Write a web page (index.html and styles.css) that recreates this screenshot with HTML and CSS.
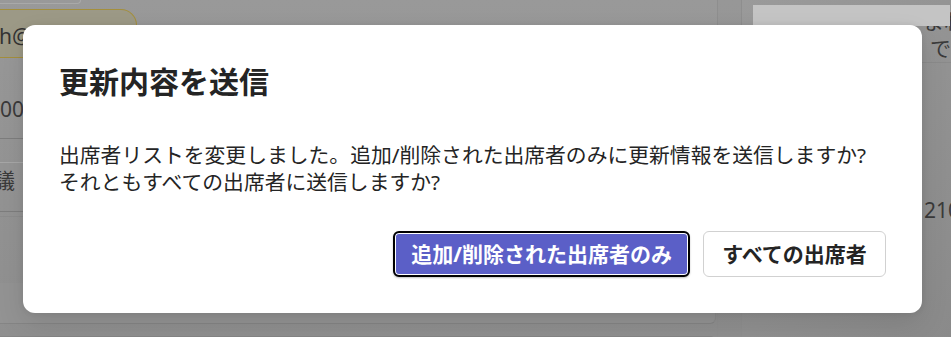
FILE: index.html
```html
<!DOCTYPE html>
<html lang="ja">
<head>
<meta charset="utf-8">
<title>更新内容を送信</title>
<link rel="stylesheet" href="styles.css">
</head>
<body>
<div class="page">
  <div class="main">
    <div class="top-tab"></div>
    <div class="mail-pill"><span class="pill-text">h@contoso.com</span></div>
    <div class="row row-amount"><span class="row-text cut-left">200</span></div>
    <div class="row row-subject"><span class="row-text cut-subject">議</span></div>
    <div class="row-spacer"></div>
    <div class="cards">
      <div class="card card-first"></div>
      <div class="card"></div>
    </div>
  </div>
  <div class="gutter"></div>
  <div class="side">
    <div class="side-head">
      <div class="side-line">まれます</div>
      <div class="side-line">での</div>
    </div>
    <div class="side-num">2100</div>
  </div>
</div>
<div class="toast"></div>
<div class="backdrop">
  <div class="dialog" role="dialog" aria-labelledby="dlg-title">
    <h2 class="dialog-title" id="dlg-title">更新内容を送信</h2>
    <p class="dialog-text">出席者リストを変更しました。追加/削除された出席者のみに更新情報を送信しますか?<br>それともすべての出席者に送信しますか?</p>
    <div class="dialog-actions">
      <button class="btn btn-primary">追加/削除された出席者のみ</button>
      <button class="btn btn-secondary">すべての出席者</button>
    </div>
  </div>
</div>
</body>
</html>
```
FILE: styles.css
```css
html, body {
  margin: 0;
  padding: 0;
}
body {
  width: 951px;
  height: 337px;
  overflow: hidden;
  position: relative;
  background: #999999;
  font-family: "Noto Sans", "Noto Sans CJK JP", sans-serif;
  color: #242424;
}
.page {
  display: flex;
  height: 337px;
}
.main {
  width: 717px;
  display: flex;
  flex-direction: column;
  background: linear-gradient(#999999, #939393 60%, #8f8f8f);
  overflow: hidden;
}
.top-tab {
  width: 80px;
  height: 3px;
  border-bottom: 1px solid #a9a9a9;
  border-right: 1px solid #a9a9a9;
  border-bottom-right-radius: 6px;
  flex: none;
}
.mail-pill {
  margin-top: 5px;
  width: 137px;
  height: 49px;
  box-sizing: border-box;
  border: 1px solid #a48f3c;
  border-left: none;
  border-radius: 0 16px 0 0;
  background: #9c9986;
  display: flex;
  align-items: center;
  overflow: hidden;
  flex: none;
}
.pill-text {
  font-size: 21px;
  color: #333;
  white-space: nowrap;
  margin-top: 4px;
  margin-left: -1px;
}
.row {
  flex: none;
  overflow: hidden;
  white-space: nowrap;
}
.row-amount {
  height: 81px;
  border-bottom: 1px solid #7d7d7d;
  display: flex;
  align-items: center;
  padding-top: 22px;
  box-sizing: border-box;
}
.row-subject {
  border-top: 23px solid transparent;
  box-shadow: inset 0 1px 0 #a7a7a7;
  border-bottom: 1px solid #7d7d7d;
  box-sizing: content-box;
  padding-top: 6px;
  height: 43px;
}
.row-text {
  font-size: 21px;
  color: #3a3a3a;
  line-height: 24px;
}
.cut-left {
  margin-left: -12px;
}
.cut-subject {
  display: inline-block;
  margin-left: -6px;
}
.row-spacer {
  height: 4px;
  border-bottom: 1px solid #8c8c8c;
  flex: none;
}
.cards {
  margin-top: auto;
  display: flex;
  flex-direction: column;
  gap: 12px;
  margin-bottom: -40px;
}
.card {
  height: 40px;
  margin-right: 1px;
  border-radius: 0 0 6px 0;
  border-right: 1px solid #8a8a8a;
  border-bottom: 1px solid #858585;
  background: #939393;
}
.card + .card {
  border-radius: 0 6px 0 0;
  border-top: 1px solid #858585;
  border-bottom: none;
  background: #8f8f8f;
}
.gutter {
  width: 23px;
  border-left: 1px solid #8e8e8e;
  border-right: 1px solid #8e8e8e;
  background: linear-gradient(#979797, #8f8f8f);
}
.side {
  flex: 1;
  background: linear-gradient(135deg, #9a9a9a, #8a8a8a);
  overflow: hidden;
  white-space: nowrap;
}
.side-head {
  height: 63px;
  border-bottom: 1px solid #8a8a8a;
  padding-left: 181px;
  padding-top: 8px;
  box-sizing: border-box;
  font-size: 21px;
  line-height: 27px;
  color: #3a3a3a;
}
.side-line + .side-line {
  padding-left: 7px;
}
.side-num {
  margin-top: 133px;
  padding-left: 182px;
  font-size: 21px;
  line-height: 28px;
  color: #3a3a3a;
}
.toast {
  position: absolute;
  top: 5px;
  left: 753px;
  width: 197px;
  height: 21px;
  background: #c4c4c4;
  z-index: 2;
}
.backdrop {
  position: absolute;
  inset: 0;
  padding: 25px 29px 0 23px;
  z-index: 3;
}
.dialog {
  background: #ffffff;
  border-radius: 12px;
  padding: 36px;
  box-sizing: border-box;
  height: 288px;
  display: flex;
  flex-direction: column;
  box-shadow: 0 0 6px rgba(0, 0, 0, 0.08), 0 12px 28px rgba(0, 0, 0, 0.1);
}
.dialog-title {
  margin: 0;
  font-size: 30px;
  line-height: 42px;
  font-weight: 700;
  color: #242424;
}
.dialog-text {
  margin: 39px 0 0 0;
  font-size: 20.8px;
  line-height: 27px;
  font-weight: 400;
  color: #242424;
}
.dialog-actions {
  margin-top: auto;
  display: flex;
  justify-content: flex-end;
  gap: 13px;
}
.btn {
  font-family: inherit;
  font-size: 21px;
  font-weight: 700;
  height: 46px;
  padding: 0 18px;
  border-radius: 6px;
  box-sizing: border-box;
  line-height: 1;
  white-space: nowrap;
  cursor: pointer;
  display: flex;
  align-items: center;
  justify-content: center;
}
.btn-primary {
  background: #5b5fc7;
  color: #ffffff;
  border: 2px solid #000000;
  box-shadow: inset 0 0 0 1px #ffffff, 0 1px 2px rgba(0, 0, 0, 0.25);
  padding: 0 16px;
  min-width: 296px;
}
.btn-secondary {
  background: #ffffff;
  color: #242424;
  border: 1px solid #d1d1d1;
  min-width: 183px;
}
```
